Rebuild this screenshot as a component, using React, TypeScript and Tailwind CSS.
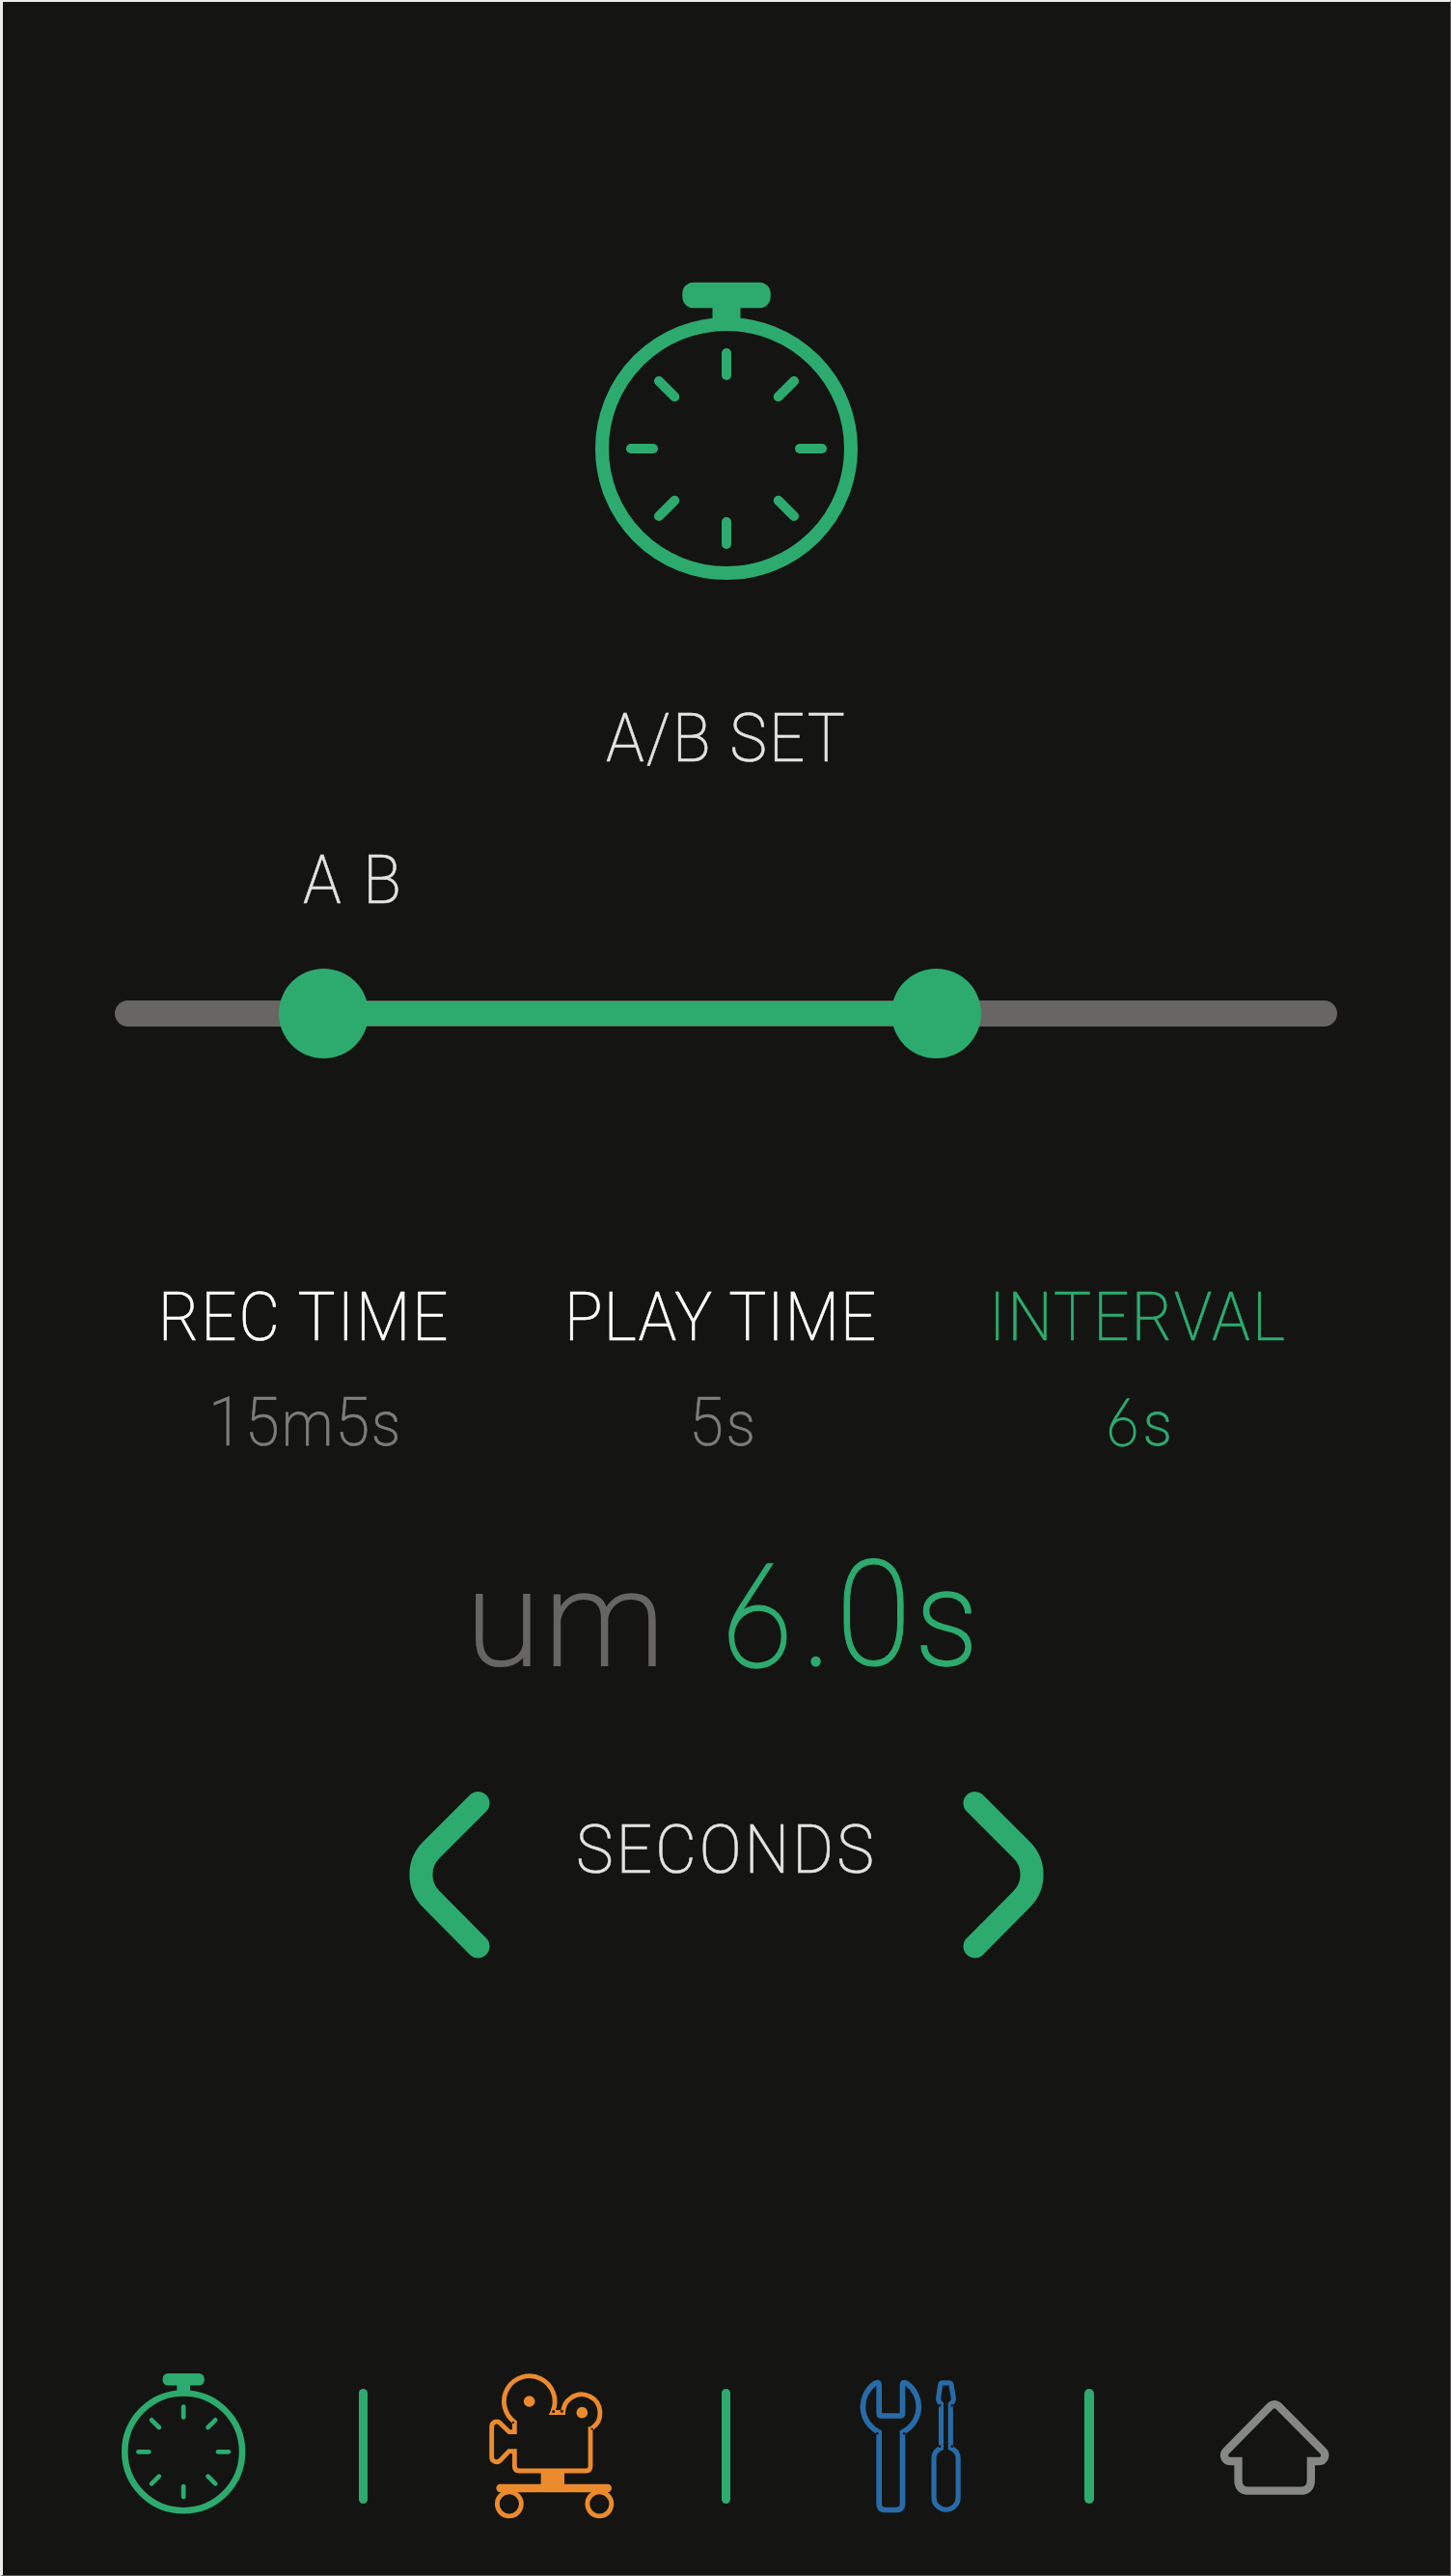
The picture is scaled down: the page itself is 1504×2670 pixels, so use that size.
import type { ReactNode } from "react";

const TICKS = [0, 45, 90, 135, 180, 225, 270, 315];

function Stopwatch({ className }: { className: string }) {
  return (
    <svg viewBox="0 0 306 340" className={className} fill="none" stroke="#2dab6e">
      <circle cx="153" cy="185" r="129" strokeWidth="14" />
      <rect x="107.3" y="12.7" width="91.4" height="26.6" rx="11.5" fill="#2dab6e" stroke="none" />
      <rect x="138.5" y="36" width="29" height="20" fill="#2dab6e" stroke="none" />
      {TICKS.map((a) => (
        <path key={a} d="M153 86V109" strokeWidth="10" strokeLinecap="round" transform={`rotate(${a} 153 185)`} />
      ))}
    </svg>
  );
}

function Camera({ className }: { className: string }) {
  return (
    <svg viewBox="0 0 510 570" className={className} fill="none" stroke="#ec8b2d" strokeWidth="14.5">
      <path d="M131 212A79 79 0 1 1 249 178" />
      <path d="M281 186A57.5 57.5 0 1 1 370 231" />
      <path d="M236 189L244 174H288V189Z" fill="#ec8b2d" stroke="none" />
      <path d="M130 207V242H113L86 215C76 205 59 211 59 226V320C59 335 76 340 86 330L113 302H130V349Q130 363 145 363H352Q366 363 366 349V226" />
      <circle cx="176" cy="147" r="17.5" fill="#ec8b2d" stroke="none" />
      <circle cx="340" cy="182" r="17.5" fill="#ec8b2d" stroke="none" />
      <rect x="212" y="363" width="73" height="46" fill="#ec8b2d" stroke="none" />
      <rect x="73" y="404" width="359" height="25.5" rx="12.5" fill="#ec8b2d" stroke="none" />
      <circle cx="113.5" cy="466" r="37.5" />
      <circle cx="394" cy="466" r="37.5" />
      <g fill="#141512" stroke="none">
        <circle cx="251" cy="178.5" r="4.5" />
        <circle cx="277" cy="177.5" r="4.5" />
        <circle cx="371" cy="233" r="3.5" />
        <circle cx="126" cy="212.5" r="3.5" />
      </g>
    </svg>
  );
}

function Tools({ className }: { className: string }) {
  return (
    <svg viewBox="0 0 450 570" className={className} fill="none" stroke="#286ba9" strokeWidth="17">
      <path d="M123.5 243A88.5 88.5 0 0 1 109 92Q123.5 83 123.5 98V184Q123.5 192 131.5 192H188.5Q196.5 192 196.5 184V98Q196.5 83 211 92A88.5 88.5 0 0 1 196.5 243V466Q196.5 484.5 178 484.5H142Q123.5 484.5 123.5 466Z" />
      <path strokeWidth="15.5" d="M316.5 292Q294 301 294 325V446A37.7 37.7 0 0 0 369.4 446V325Q369.4 301 346 292V155Q356 147 355 137L348 96Q347 89.5 340 89.5H322Q315 89.5 314 96L308 137Q307 147 316.5 155Z" />
      <g fill="#141512" stroke="none">
        <circle cx="118" cy="247" r="4" />
        <circle cx="202" cy="247" r="4" />
        <circle cx="312" cy="160" r="4" />
        <circle cx="350.5" cy="160" r="4" />
        <circle cx="312" cy="287" r="4" />
        <circle cx="350.5" cy="287" r="4" />
      </g>
    </svg>
  );
}

function Home({ className }: { className: string }) {
  return (
    <svg viewBox="483 130 360 330" className={className} fill="none" stroke="#868883" strokeWidth="25">
      <path d="M550.5 334H527C507 334 502 313 513 302L648 165Q663 150 678 165L814 302C825 313 820 334 800 334H776.5V393Q776.5 426 743 426H584Q550.5 426 550.5 393Z" />
    </svg>
  );
}

function Chevron({ className }: { className: string }) {
  return (
    <svg viewBox="0 0 96 180" className={className} fill="none" stroke="#2dab6e" strokeWidth="24" strokeLinecap="round">
      <path d="M83.5 16L35 64.5A36 36 0 0 0 35 115.5L83.5 164.5" />
    </svg>
  );
}

function Label({ className, children }: { className: string; children: ReactNode }) {
  return (
    <div className={`h-[50px] text-[70.3px] leading-[50px] ${className}`}>
      <span className="inline-block origin-left scale-x-[0.93] whitespace-pre [-webkit-text-stroke:0.008em_currentColor]">{children}</span>
    </div>
  );
}

function Six() {
  return (
    <span className="inline-block origin-left scale-x-[0.94] font-['Lato'] text-[0.97em] font-thin leading-[0] [-webkit-text-stroke:0.033em_currentColor]">6</span>
  );
}

/* Lowercase unit letters sit slightly smaller than the figures beside them. */
function Unit({ children }: { children: ReactNode }) {
  return <span className="text-[0.92em] leading-[0] [-webkit-text-stroke:0.012em_currentColor]">{children}</span>;
}

function Divider({ className }: { className: string }) {
  return <div className={`mt-[36px] h-[119px] w-[9.5px] shrink-0 rounded-full bg-[#2dab6e] ${className}`} />;
}

export default function App() {
  return (
    <div className="h-[2670px] w-[1504px] overflow-hidden border-b border-l-[3px] border-r border-t-2 border-b-[#5a5456] border-l-[#e8ebe8] border-r-[#5a5456] border-t-[#e8ebe8] bg-[#141512]">
      <main className="flex h-full flex-col font-['Roboto',sans-serif] font-extralight text-[#e3e3df]">
        <Stopwatch className="ml-[597px] mt-[278px] h-[340px] w-[306px] shrink-0" />

        <Label className="ml-[625px] mt-[120px] tracking-[2.1px]">A/B SET</Label>
        <Label className="ml-[311px] mt-[97px] tracking-[3.6px]">A B</Label>

        <div className="relative ml-[116px] mt-[100px] h-[26.5px] w-[1267px] shrink-0 rounded-full bg-[#676662]">
          <div className="absolute left-[216px] top-px h-[24.5px] w-[635px] bg-[#2dab6e]" />
          <div className="absolute left-[169.5px] top-[-33.2px] size-[93px] rounded-full bg-[#2dab6e]" />
          <div className="absolute left-[804.5px] top-[-33.2px] size-[93px] rounded-full bg-[#2dab6e]" />
        </div>

        <div className="mt-[276.5px] flex">
          <Label className="ml-[161px] w-[421px] tracking-[2.2px] text-white">REC TIME</Label>
          <Label className="w-[440px] tracking-[1.2px] text-white">PLAY TIME</Label>
          <Label className="tracking-[2.4px] text-[#2dab6e]">INTERVAL</Label>
        </div>
        <div className="mt-[59px] flex text-[#7c7e7a]">
          <Label className="ml-[213px] w-[498px] tracking-[2px]">15<Unit>m</Unit>5<Unit>s</Unit></Label>
          <Label className="w-[432px] tracking-[3px]">5<Unit>s</Unit></Label>
          <Label className="tracking-[2px] text-[#2dab6e]"><Six /><Unit>s</Unit></Label>
        </div>

        <div className="mt-[120.5px] flex h-[108px] text-[152.7px] leading-[108px]">
          <div className="ml-[480px] w-[264px] text-[#676662]">
            <span className="inline-block origin-left scale-x-[1.02] tracking-[4px]"><span className="text-[0.9em] leading-[0] [-webkit-text-stroke:0.014em_currentColor]">um</span></span>
          </div>
          <div className="text-[#2dab6e]">
            <span className="inline-block origin-left scale-x-[0.93] tracking-[4.2px] [-webkit-text-stroke:0.007em_currentColor]"><Six />.0<Unit>s</Unit></span>
          </div>
        </div>

        <div className="mt-[125.5px] flex h-[180px]">
          <Chevron className="ml-[409px] h-[180px] w-[96px] shrink-0" />
          <Label className="ml-[89px] mt-[39px] w-[401px] tracking-[3.4px]">SECONDS</Label>
          <Chevron className="h-[180px] w-[96px] shrink-0 -scale-x-100" />
        </div>

        <nav className="mt-[406.5px] flex h-[190px] items-start">
          <Stopwatch className="ml-[115.3px] mt-[14.4px] h-[160.5px] w-[144.4px] shrink-0" />
          <Divider className="ml-[109.2px]" />
          <Camera className="ml-[108.6px] h-[190px] w-[170px] shrink-0" />
          <Divider className="ml-[88px]" />
          <Tools className="ml-[112.5px] h-[190px] w-[150px] shrink-0" />
          <Divider className="ml-[104.2px]" />
          <Home className="ml-[127.3px] mt-[43.3px] h-[110px] w-[120px] shrink-0" />
        </nav>
      </main>
    </div>
  );
}
